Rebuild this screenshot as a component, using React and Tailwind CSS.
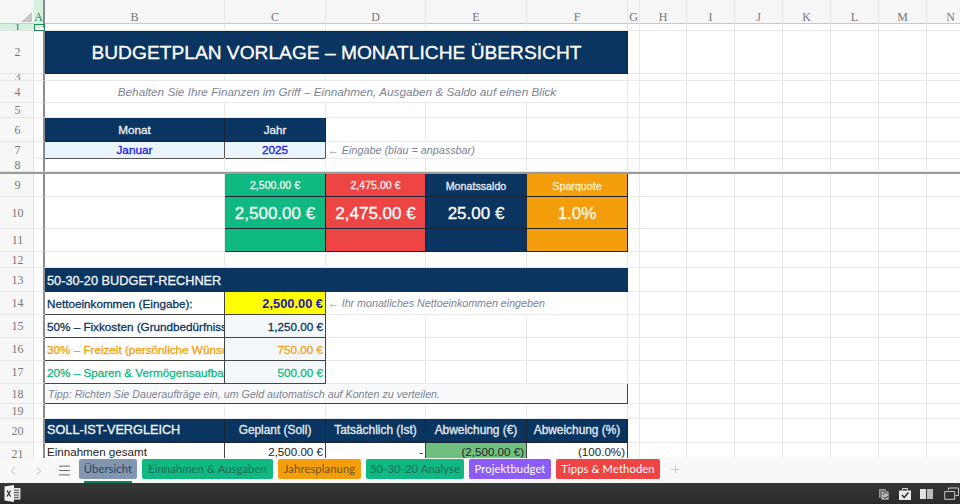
import React from "react";
import { ChevronLeft, ChevronRight, Menu, Plus } from "lucide-react";

const FONT = "font-['Liberation_Sans',Arial,sans-serif]";
const G = "border-r border-b border-[#e9e9e9]";
const NAVY = "bg-[#0a3561]";
const M = "[-webkit-text-stroke:0.3px_currentColor]";
const CELL = "flex items-center overflow-hidden whitespace-nowrap border-r border-b border-[#444] pt-[1px]";
const LAST = "flex items-center overflow-hidden whitespace-nowrap border-r border-b border-[#444] pb-[4px]";
const kpiB = "flex items-center justify-center whitespace-nowrap border-r border-b border-[#1b2430] pt-[1px]";
const kpiB2 = "flex items-center justify-center whitespace-nowrap border-r border-b border-[#1b2430] pt-[2px]";

function Row({ n, h, children, frozen, active }) {
  return (
    <div className={`grid grid-cols-[34px_11px_180px_101px_100px_101px_101px_12px_47px_48px_48px_48px_48px_48px_48px] ${h} ${frozen ? "border-b-2 border-[#9a9a9a]" : ""}`}>
      <div className={`flex items-center justify-center overflow-hidden font-['Liberation_Serif',serif] text-[12px] leading-none border-r border-b border-[#e4e4e4] ${active ? "bg-[#d6f0e0] text-[#666]" : "bg-[#f7f7f7] text-[#777]"}`}>
        <span className="pl-[2px]">{n}</span>
      </div>
      <div className={active ? "border-[1.5px] border-[#1d8a55]" : "border-r-2 border-r-[#8c8c8c] border-b border-b-[#e9e9e9]"} />
      {children}
      <div className={G} />
      <div className={G} />
      <div className={G} />
      <div className={G} />
      <div className={G} />
      <div className={G} />
      <div className={G} />
      <div className={G} />
    </div>
  );
}

function E() {
  return <div className={G} />;
}

function HeaderRow() {
  const letters = ["B", "C", "D", "E", "F", "G", "H", "I", "J", "K", "L", "M", "N"];
  return (
    <div className="grid h-[24px] grid-cols-[34px_11px_180px_101px_100px_101px_101px_12px_47px_48px_48px_48px_48px_48px_48px] border-b border-[#c9c9c9] bg-[#f6f6f6] font-['Liberation_Serif',serif] text-[12px] text-[#777]">
      <div className="relative">
        <svg className="absolute left-[21px] top-[12px]" width="11" height="10" viewBox="0 0 11 10">
          <path d="M11 0V10H0Z" fill="#c4c4c4" />
        </svg>
      </div>
      <div className="flex items-end justify-center border-r-2 border-r-[#8c8c8c] bg-[#d6f0e0] pb-[2px] pt-[8px] text-[#1d8a55]">A</div>
      {letters.map((l) => (
        <div key={l} className="flex items-end justify-center border-r border-[#e6e6e6] pb-[2px]">{l}</div>
      ))}
    </div>
  );
}

function StatusIcons() {
  return (
    <div className="ml-auto flex items-center">
      <svg width="14" height="14" viewBox="0 0 14 14" fill="none">
        <path d="M1 2h7v9H1z" fill="#9a9a9a" />
        <path d="M3 4h8v9H3z" fill="#bdbdbd" stroke="#2f3131" strokeWidth=".8" />
        <path d="M5 8a2.6 2.6 0 0 1 4.6-1.4M9.8 9a2.6 2.6 0 0 1-4.5 1.2" stroke="#2f3131" strokeWidth="1" />
      </svg>
      <svg className="ml-[6px]" width="14" height="14" viewBox="0 0 14 14" fill="none">
        <path d="M4.5 3.5V1.5h5v2" stroke="#ddd" strokeWidth="1" />
        <path d="M1 3.5h12v9.5H1z" fill="#e8e8e8" />
        <path d="M4 8l2.2 2.4L10.4 5.4" stroke="#2a2a2a" strokeWidth="1.5" />
      </svg>
      <svg className="ml-[8px]" width="13" height="12" viewBox="0 0 13 12">
        <path d="M0 1h6v10H0z" fill="#e2e2e2" />
        <path d="M7 1h6v10H7z" fill="#bcbcbc" />
      </svg>
      <svg className="ml-[11px]" width="15" height="13" viewBox="0 0 15 13" fill="none">
        <path d="M4.5 3V1h10v7.5h-3" stroke="#c9c9c9" strokeWidth="1" />
        <path d="M.7 4.5h10v7.8H.7z" stroke="#c9c9c9" strokeWidth="1" />
      </svg>
    </div>
  );
}

function ExcelIcon() {
  return (
    <svg width="17" height="17" viewBox="0 0 17 17" fill="none">
      <path d="M8 3h8.4v11.5H8z" fill="#e6e6e6" />
      <path d="M10 5.2h5M10 7.6h5M10 10h5M10 12.4h5" stroke="#4a4a4a" strokeWidth="1" />
      <path d="M0.5 1.5L10 0v17L0.5 15.5z" fill="#f2f2f2" />
      <path d="M3 5.5l3.5 6M6.5 5.5l-3.5 6" stroke="#333" strokeWidth="1.3" />
    </svg>
  );
}

export default function App() {
  return (
    <div className={`${FONT} flex h-[504px] w-[960px] flex-col overflow-hidden bg-white`}>
      <div className="h-[458px] overflow-hidden">
        <HeaderRow />
        <Row n="1" h="h-[7px]" active>
          <E /><E /><E /><E /><E />
        </Row>
        <Row n="2" h="h-[43px]">
          <div className={`col-span-5 flex items-center justify-center whitespace-nowrap border border-[#1b2430] pt-[1px] ${NAVY} text-[19.2px] text-white ${M}`}>
            BUDGETPLAN VORLAGE – MONATLICHE ÜBERSICHT
          </div>
        </Row>
        <Row n="3" h="h-[7px]">
          <E /><E /><E /><E /><E />
        </Row>
        <Row n="4" h="h-[22px]">
          <div className={`col-span-5 flex items-center justify-center whitespace-nowrap pl-[2px] pt-[1px] text-[11.75px] italic text-[#7d8494] ${G}`}>
            Behalten Sie Ihre Finanzen im Griff – Einnahmen, Ausgaben &amp; Saldo auf einen Blick
          </div>
        </Row>
        <Row n="5" h="h-[15px]">
          <E /><E /><E /><E /><E />
        </Row>
        <Row n="6" h="h-[24px]">
          <div className={`${kpiB} ${NAVY} text-[11.7px] text-[#eef2f6] ${M}`}>Monat</div>
          <div className={`${kpiB} ${NAVY} text-[11.7px] text-[#eef2f6] ${M}`}>Jahr</div>
          <E /><E /><E />
        </Row>
        <Row n="7" h="h-[16px]">
          <div className={`${CELL} justify-center border-[#555] bg-[#eaf4fb] text-[11.8px] text-[#1a1ae6] ${M}`}>Januar</div>
          <div className={`${CELL} justify-center border-[#555] bg-[#eaf4fb] text-[11.8px] text-[#1a1ae6] ${M}`}>2025</div>
          <div className={`col-span-2 flex items-center whitespace-nowrap pl-[2px] text-[10.8px] italic text-[#7d8494] ${G}`}>← Eingabe (blau = anpassbar)</div>
          <E />
        </Row>
        <Row n="8" h="h-[16px]" frozen>
          <E /><E /><E /><E /><E />
        </Row>
        <Row n="9" h="h-[23px]">
          <E />
          <div className={`${kpiB2} bg-[#10b981] text-[10.6px] text-[#e8f8f2] ${M}`}>2,500.00 €</div>
          <div className={`${kpiB2} bg-[#ef4444] text-[10.6px] text-[#fdeaea] ${M}`}>2,475.00 €</div>
          <div className={`${kpiB2} ${NAVY} text-[10.7px] text-[#e6ecf2] ${M}`}>Monatssaldo</div>
          <div className={`${kpiB2} bg-[#f59e0b] text-[10.7px] text-[#fdf0d5] ${M}`}>Sparquote</div>
        </Row>
        <Row n="10" h="h-[32px]">
          <E />
          <div className={`${kpiB2} bg-[#10b981] text-[17px] text-[#f2fbf8] ${M}`}>2,500.00 €</div>
          <div className={`${kpiB2} bg-[#ef4444] text-[17px] text-white ${M}`}>2,475.00 €</div>
          <div className={`${kpiB2} ${NAVY} text-[17px] text-white ${M}`}>25.00 €</div>
          <div className={`${kpiB2} bg-[#f59e0b] text-[17px] text-[#fff6e4] ${M}`}>1.0%</div>
        </Row>
        <Row n="11" h="h-[23px]">
          <E />
          <div className={`bg-[#10b981] ${kpiB}`} />
          <div className={`bg-[#ef4444] ${kpiB}`} />
          <div className={`${NAVY} ${kpiB}`} />
          <div className={`bg-[#f59e0b] ${kpiB}`} />
        </Row>
        <Row n="12" h="h-[16px]">
          <E /><E /><E /><E /><E />
        </Row>
        <Row n="13" h="h-[24px]">
          <div className={`col-span-5 flex items-center whitespace-nowrap pl-[2px] pt-[1px] ${NAVY} text-[12.75px] text-[#f2f5f8] ${M}`}>50-30-20 BUDGET-RECHNER</div>
        </Row>
        <Row n="14" h="h-[23px]">
          <div className={`${CELL} pl-[2px] text-[11.7px] text-[#0a3561] ${M}`}>Nettoeinkommen (Eingabe):</div>
          <div className={`${CELL} justify-end bg-[#ffff00] pr-[2px] text-[12.85px] font-bold text-[#1a1ab0]`}>2,500.00 €</div>
          <div className={`col-span-3 flex items-center whitespace-nowrap pl-[2px] pt-[1px] text-[10.7px] italic text-[#7d8494] ${G}`}>← Ihr monatliches Nettoeinkommen eingeben</div>
        </Row>
        <Row n="15" h="h-[23px]">
          <div className={`${CELL} pl-[2px] text-[11.7px] text-[#0a3561] ${M}`}>50% – Fixkosten (Grundbedürfnisse)</div>
          <div className={`${CELL} justify-end bg-[#f5f8fb] pr-[2px] text-[11.7px] text-[#0a3561] ${M}`}>1,250.00 €</div>
          <E /><E /><E />
        </Row>
        <Row n="16" h="h-[23px]">
          <div className={`${CELL} pl-[2px] text-[11.7px] text-[#f59e0b] ${M}`}>30% – Freizeit (persönliche Wünsche)</div>
          <div className={`${CELL} justify-end bg-[#f5f8fb] pr-[2px] text-[11.7px] text-[#f59e0b] ${M}`}>750.00 €</div>
          <E /><E /><E />
        </Row>
        <Row n="17" h="h-[23px]">
          <div className={`${CELL} pl-[2px] text-[11.7px] text-[#10b981] ${M}`}>20% – Sparen &amp; Vermögensaufbau</div>
          <div className={`${CELL} justify-end bg-[#f5f8fb] pr-[2px] text-[11.7px] text-[#10b981] ${M}`}>500.00 €</div>
          <E /><E /><E />
        </Row>
        <Row n="18" h="h-[20px]">
          <div className={`${CELL} col-span-5 bg-[#f8fafc] pl-[3px] text-[10.7px] italic text-[#7d8494]`}>
            Tipp: Richten Sie Daueraufträge ein, um Geld automatisch auf Konten zu verteilen.
          </div>
        </Row>
        <Row n="19" h="h-[15px]">
          <E /><E /><E /><E /><E />
        </Row>
        <Row n="20" h="h-[24px]">
          <div className={`flex items-center whitespace-nowrap border-r border-b border-[#1b2430] pl-[2px] pt-[1px] ${NAVY} text-[12.7px] text-[#f2f5f8] ${M}`}>SOLL-IST-VERGLEICH</div>
          <div className={`${kpiB} ${NAVY} text-[11.9px] text-[#e6ecf2] ${M}`}>Geplant (Soll)</div>
          <div className={`${kpiB} ${NAVY} text-[11.9px] text-[#e6ecf2] ${M}`}>Tatsächlich (Ist)</div>
          <div className={`${kpiB} ${NAVY} text-[11.9px] text-[#e6ecf2] ${M}`}>Abweichung (€)</div>
          <div className={`${kpiB} ${NAVY} text-[11.9px] text-[#e6ecf2] ${M}`}>Abweichung (%)</div>
        </Row>
        <Row n="21" h="h-[23px]">
          <div className={`${LAST} pl-[2px] text-[11.6px] text-[#222]`}>Einnahmen gesamt</div>
          <div className={`${LAST} justify-end pr-[2px] text-[11.6px] text-[#222]`}>2,500.00 €</div>
          <div className={`${LAST} justify-end pr-[2px] text-[11.6px] text-[#222]`}>-</div>
          <div className={`${LAST} justify-end bg-[#6fc07f] pr-[2px] text-[11.6px] text-[#222]`}>(2,500.00 €)</div>
          <div className={`${LAST} justify-end pr-[2px] text-[11.6px] text-[#222]`}>(100.0%)</div>
        </Row>
      </div>

      <div className="flex h-[25px] items-start whitespace-nowrap bg-[#f8f8f8] font-['Lato',sans-serif] text-[11.2px] tracking-[0.12px]">
        <div className="flex w-[79px] items-center pl-[6px] pt-[5px]">
          <ChevronLeft size={14} className="text-[#d4d4d4]" />
          <ChevronRight size={14} className="ml-[12px] text-[#d4d4d4]" />
          <Menu size={15} strokeWidth={1.6} className="ml-[11px] text-[#666]" />
        </div>
        <div className="relative mt-[1px] flex h-[20px] w-[58px] items-center justify-center rounded-[2px] bg-[#8396b0] text-[#23445c]">
          Übersicht
          <div className="absolute left-[5px] top-[22px] h-[2px] w-[48px] bg-[#0f7f55]" />
        </div>
        <div className="ml-[5px] mt-[1px] flex h-[20px] w-[131px] items-center justify-center rounded-[2px] bg-[#10b981] text-[#1d6b5c]">Einnahmen &amp; Ausgaben</div>
        <div className="ml-[5px] mt-[1px] flex h-[20px] w-[83px] items-center justify-center rounded-[2px] bg-[#f59e0b] text-[#70551a]">Jahresplanung</div>
        <div className="ml-[5px] mt-[1px] flex h-[20px] w-[98px] items-center justify-center rounded-[2px] bg-[#10b981] text-[#1d6b5c]">50-30-20 Analyse</div>
        <div className="ml-[5px] mt-[1px] flex h-[20px] w-[82px] items-center justify-center rounded-[2px] bg-[#8b5cf6] text-white">Projektbudget</div>
        <div className="ml-[5px] mt-[1px] flex h-[20px] w-[104px] items-center justify-center rounded-[2px] bg-[#ef4444] text-white">Tipps &amp; Methoden</div>
        <Plus size={13} strokeWidth={1.5} className="ml-[9px] mt-[5px] text-[#c4c4c4]" />
      </div>

      <div className="flex h-[21px] items-center bg-gradient-to-b from-[#363838] to-[#2a2b2b] pl-[4px] pr-[1px]">
        <ExcelIcon />
        <StatusIcons />
      </div>
    </div>
  );
}
